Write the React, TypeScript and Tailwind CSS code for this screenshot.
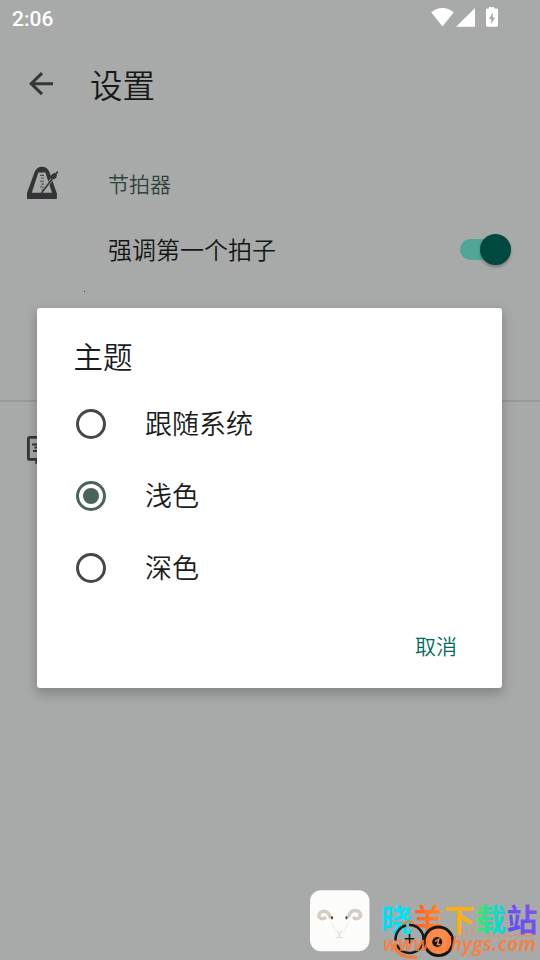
import React from "react";

function StatusBar() {
  return (
    <header className="flex h-[38px] shrink-0 items-center justify-between pl-3 pr-[40px] text-white">
      <span className="font-['Roboto',sans-serif] text-[21px] font-medium leading-none">2:06</span>
      <svg className="-mt-[4px] h-[20px] w-[70px]" viewBox="430 7 70 20" fill="currentColor">
        <path d="M431.2 12.2Q442.4 3.6 453.8 12.2L442.5 26.6Z" />
        <path d="M475 8V26.8H456.2Z" />
        <path
          fillRule="evenodd"
          d="M489 8.4V7H494V8.4H496.6Q498 8.4 498 9.8V25.4Q498 26.8 496.6 26.8H487.4Q486 26.8 486 25.4V9.8Q486 8.4 487.4 8.4ZM492.8 12.5L489 19H491.3V24.3L495 17.4H492.8Z"
        />
      </svg>
    </header>
  );
}

function MetronomeIcon() {
  return (
    <svg className="-mt-[1px] h-[36px] w-[34px]" viewBox="26 164 34 36" fill="none">
      <path
        fill="#343438"
        fillRule="evenodd"
        d="M27 198V192L34.8 170.5Q37 165.7 42 165.7T49.2 170.5L56.7 192V198ZM31.8 191.7H52L45.4 171.5H38.3Z"
      />
      <path
        d="M40 174.4H44M41.3 177.3H44M40 180.2H44M41.3 183.1H44M40 186H44M41.3 188.8H43"
        stroke="#4b4c4e"
        strokeWidth="1.1"
      />
      <path d="M47.2 184.4L57.8 170.4" stroke="#a8aaa9" strokeWidth="2.8" />
      <path d="M41.5 192L57.8 170.4" stroke="#343438" strokeWidth="1.6" />
      <path d="M51.1 174.3L54.1 171.7L57 173.7L56.2 176.9L53.1 178.4L50.6 176.8Z" fill="#343438" />
      <path d="M27 192H56.7V198H27Z" fill="#343438" />
    </svg>
  );
}

function Radio({ label, selected = false }: { label: string; selected?: boolean }) {
  return (
    <div role="radio" aria-checked={selected} className="flex h-[72px] items-center pl-[39px]">
      <span
        className={
          selected
            ? "flex size-[30px] items-center justify-center rounded-full border-[3px] border-[#4a635c]"
            : "flex size-[30px] items-center justify-center rounded-full border-[3px] border-[#464749]"
        }
      >
        {selected && <span className="size-[16px] rounded-full bg-[#4a635c]" />}
      </span>
      <span className="-mt-[2px] ml-[39px] text-[27px] font-[350] leading-[36px] text-[#191c1b]">{label}</span>
    </div>
  );
}

function ThemeDialog() {
  return (
    <section
      role="dialog"
      className="absolute left-[37px] top-[308px] flex h-[380px] w-[465px] flex-col rounded-[3px] bg-white shadow-[0_5px_12px_1px_rgba(0,0,0,0.22)]"
    >
      <h2 className="mt-[27px] h-[40px] pl-[36.5px] text-[29.5px] font-[350] leading-[40px] text-[#191c1b]">主题</h2>
      <div role="radiogroup" className="mt-[13px]">
        <Radio label="跟随系统" />
        <Radio label="浅色" selected />
        <Radio label="深色" />
      </div>
      <div className="mt-[27px] flex justify-end pr-[45px]">
        <button className="h-[28px] text-[21px] font-[350] leading-[28px] text-[#006b5b]">取消</button>
      </div>
    </section>
  );
}

function Watermark() {
  return (
    <aside className="absolute bottom-0 left-[310px] h-[70px] w-[230px]">
      <svg className="h-[70px] w-[230px]" viewBox="310 890 230 70">
        <defs>
          <linearGradient id="cyan" x1="0" x2="1">
            <stop offset="0" stopColor="#08d8f5" />
            <stop offset="1" stopColor="#08e5f0" />
          </linearGradient>
          <linearGradient id="orange" x1="0" x2="1">
            <stop offset="0" stopColor="#ff5b2e" />
            <stop offset="1" stopColor="#ff8c24" />
          </linearGradient>
          <linearGradient id="green" x1="0" x2="1">
            <stop offset="0" stopColor="#4fe35d" />
            <stop offset=".45" stopColor="#27dba0" />
            <stop offset="1" stopColor="#08d5ef" />
          </linearGradient>
          <linearGradient id="violet" x1="0" y1="1" x2="1" y2="0">
            <stop offset="0" stopColor="#5750e7" />
            <stop offset="1" stopColor="#8d51ee" />
          </linearGradient>
        </defs>
        <rect x="310" y="890.2" width="59.5" height="61" rx="11" fill="#fcfcfa" />
        <path d="M330 917C329 911 323 910 320 913C317 917 321 920 325 918" fill="none" stroke="#d5cdc3" strokeWidth="3.4" strokeLinecap="round" />
        <path d="M349 916C350 910 357 909 360 913C362 917 358 920 354 918" fill="none" stroke="#d5cdc3" strokeWidth="3.4" strokeLinecap="round" />
        <ellipse cx="332" cy="917.8" rx="1.2" ry="1.8" fill="#56514d" />
        <ellipse cx="346.5" cy="917.8" rx="1.2" ry="1.8" fill="#56514d" />
        <path d="M332 923L335.5 932.5M348 923L343.8 932.5" stroke="#efefec" fill="none" />
        <path d="M336.5 931L339.3 933.5L342.5 931M339.3 933.5V936.5M336.5 938Q339.5 936 342.5 938" stroke="#cbc7c2" strokeWidth=".8" fill="none" />
        <path d="M462 927V937M467 931V938M472 926V937M485 936H533M489 932L494 936M504 932V938M514 934H533" stroke="#e88d5d" strokeWidth="2" opacity=".55" />
        <g className="font-['Noto_Sans_CJK_SC',sans-serif] text-[31px] font-bold">
          <text x="381" y="931" fill="url(#cyan)">晓</text>
          <text x="412.5" y="931" fill="url(#orange)">羊</text>
          <text x="444" y="931" fill="#f9b016">下</text>
          <text x="475" y="931" fill="url(#green)">载</text>
          <text x="506.5" y="931" fill="url(#violet)">站</text>
        </g>
        <path d="M394 944Q397 959 417 957" fill="none" stroke="#f57a35" strokeWidth="3" />
        <path d="M402 925Q408 919 414 923" fill="none" stroke="#f57a35" strokeWidth="2" />
        <circle cx="409.5" cy="939" r="14" fill="none" stroke="#171717" strokeWidth="2.4" strokeDasharray="38 4 20 3" />
        <path d="M409.5 934V943.5M404.8 938.7H414.2" stroke="#171717" strokeWidth="1.6" />
        <circle cx="438.5" cy="941.3" r="14.3" fill="#f98b4c" stroke="#171717" strokeWidth="3" />
        <text
          x="383"
          y="951"
          textLength="153"
          lengthAdjust="spacingAndGlyphs"
          fill="#fc7d3b"
          fillOpacity=".85"
          className="font-['Open_Sans',sans-serif] text-[19px] font-bold italic"
        >
          www.xlhygs.com
        </text>
        <circle cx="437.2" cy="942" r="5" fill="#171717" />
        <path d="M435 941.5L438.8 939L437.4 944.5H440.5" fill="none" stroke="#f98b4c" strokeWidth="1.4" />
      </svg>
    </aside>
  );
}

export default function App() {
  return (
    <main
      lang="zh-CN"
      className="relative flex h-[960px] w-[540px] flex-col overflow-hidden bg-[#a8aaa9] font-['Noto_Sans_CJK_SC',sans-serif]"
    >
      <StatusBar />
      <nav className="flex h-[92px] shrink-0 items-center pl-[28px]">
        <svg className="h-[26px] w-[26px]" viewBox="0 0 26 26" fill="none" stroke="#343638" strokeWidth="3">
          <path d="M25 12.7H3.2M14 2.2L3.2 12.7L14 23.2" />
        </svg>
        <h1 className="-mt-[1px] ml-[36px] text-[32.5px] font-[350] leading-[44px] text-[#161918]">设置</h1>
      </nav>
      <section className="h-[270px] shrink-0">
        <div className="flex h-[106px] items-center pl-[26px]">
          <MetronomeIcon />
          <h2 className="-mt-[1px] ml-[48px] text-[21px] font-[350] leading-[28px] text-[#30423d]">节拍器</h2>
        </div>
        <div className="-mt-[5px] flex h-[36px] items-center justify-between pl-[108px] pr-[29px]">
          <span className="text-[24px] font-[350] leading-[36px] text-[#131615]">强调第一个拍子</span>
          <div role="switch" aria-checked="true" className="flex h-[21px] w-[51px] items-center justify-end rounded-full bg-[#50a798]">
            <span className="size-[31px] shrink-0 rounded-full bg-[#00493e] shadow-[0_2px_3px_rgba(0,0,0,0.3)]" />
          </div>
        </div>
        <div className="mt-[24px] ml-[84px] size-px bg-[#343638]" />
      </section>
      <section className="border-t-2 border-[#989a99] pt-[33px]">
        <svg className="ml-[26px] h-[32px] w-[34px]" viewBox="0 0 34 32" fill="none" stroke="#343638" strokeWidth="2.8">
          <rect x="2.4" y="2.4" width="28.6" height="22" rx="1.5" />
          <path d="M10.8 24.4V27L16 24.4" />
          <path d="M6 9.5H15M7 16H15M8.5 12.5H11" strokeWidth="1.8" />
        </svg>
      </section>
      <ThemeDialog />
      <Watermark />
    </main>
  );
}
